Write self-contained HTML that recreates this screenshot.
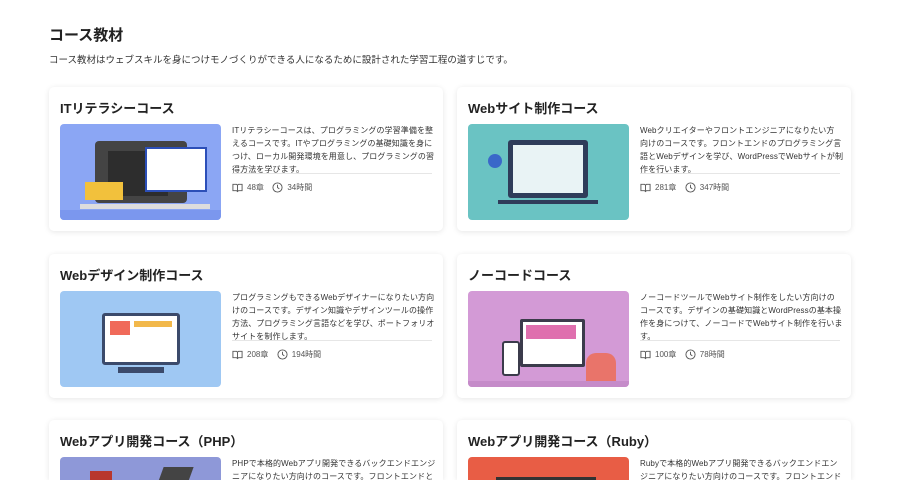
<!DOCTYPE html>
<html><head><meta charset="utf-8"><style>
*{margin:0;padding:0;box-sizing:border-box}
html,body{width:900px;height:482px;overflow:hidden;background:#fff}
body{font-family:"Liberation Sans","Noto Sans CJK JP",sans-serif;color:#222;position:relative}
.wrap{position:absolute;left:0;top:0;width:900px;height:480px;overflow:hidden}
h1{position:absolute;left:49px;top:24px;font-size:15px;font-weight:bold}
.lead{position:absolute;left:49px;top:52px;font-size:9.5px;color:#333}
.card{position:absolute;width:394px;height:144px;background:#fff;border-radius:5px;box-shadow:0 1px 6px rgba(0,0,0,.1)}
.card.last{height:60px;border-radius:5px 5px 0 0}
.card h2{position:absolute;left:11px;top:11px;font-size:13px;font-weight:bold;color:#222}
.img{position:absolute;left:11px;top:37px;width:161px;height:96px;border-radius:4px;overflow:hidden}
.desc{position:absolute;left:183px;top:37px;width:204px;font-size:8px;line-height:13px;color:#333;letter-spacing:.1px}
.hr{position:absolute;left:183px;top:86px;width:200px;border-top:1px solid #e6e6e6}
.meta{position:absolute;left:183px;top:95px;font-size:8px;color:#555;display:flex;align-items:center;gap:4px}
.meta svg{width:11px;height:11px}
</style></head><body><div class="wrap">
<h1>コース教材</h1>
<div class="lead">コース教材はウェブスキルを身につけモノづくりができる人になるために設計された学習工程の道すじです。</div>

<div class="card" style="left:49px;top:87px"><h2>ITリテラシーコース</h2>
<div class="img" style="background:#8ba6f4"><div style="position:absolute;left:35px;top:17px;width:92px;height:62px;background:#444;border-radius:4px"></div><div style="position:absolute;left:48px;top:27px;width:60px;height:45px;background:#2d2d2d"></div><div style="position:absolute;left:85px;top:23px;width:62px;height:45px;background:#fff;border:2px solid #2c4fb8"></div><div style="position:absolute;left:20px;top:80px;width:130px;height:5px;background:#ddd"></div><div style="position:absolute;left:25px;top:58px;width:38px;height:18px;background:#f2c13c"></div><div style="position:absolute;left:0;top:86px;width:161px;height:10px;background:#7b97ee"></div></div>
<div class="desc">ITリテラシーコースは、プログラミングの学習準備を整えるコースです。ITやプログラミングの基礎知識を身につけ、ローカル開発環境を用意し、プログラミングの習得方法を学びます。</div>
<div class="hr"></div>
<div class="meta"><svg viewBox="0 0 12 12" fill="none" stroke="#555" stroke-width="1"><path d="M1 2.5h4l1 1 1-1h4v7H7l-1 1-1-1H1z M6 3.5v6"/></svg>48章 &nbsp;<svg viewBox="0 0 12 12" fill="none" stroke="#555" stroke-width="1"><circle cx="6" cy="6" r="5"/><path d="M6 3v3l2 1.5"/></svg>34時間</div></div>

<div class="card" style="left:457px;top:87px"><h2>Webサイト制作コース</h2>
<div class="img" style="background:#6ac3c3"><div style="position:absolute;left:40px;top:16px;width:80px;height:58px;background:#2f3c5a;border-radius:3px"></div><div style="position:absolute;left:45px;top:21px;width:70px;height:48px;background:#e9f3f5"></div><div style="position:absolute;left:30px;top:76px;width:100px;height:4px;background:#2f3c5a"></div><div style="position:absolute;left:20px;top:30px;width:14px;height:14px;border-radius:50%;background:#3a68c9"></div></div>
<div class="desc">Webクリエイターやフロントエンジニアになりたい方<br>向けのコースです。フロントエンドのプログラミング言語とWebデザインを学び、WordPressでWebサイトが制作を行います。</div>
<div class="hr"></div>
<div class="meta"><svg viewBox="0 0 12 12" fill="none" stroke="#555" stroke-width="1"><path d="M1 2.5h4l1 1 1-1h4v7H7l-1 1-1-1H1z M6 3.5v6"/></svg>281章 &nbsp;<svg viewBox="0 0 12 12" fill="none" stroke="#555" stroke-width="1"><circle cx="6" cy="6" r="5"/><path d="M6 3v3l2 1.5"/></svg>347時間</div></div>

<div class="card" style="left:49px;top:254px"><h2>Webデザイン制作コース</h2>
<div class="img" style="background:#9fc8f3"><div style="position:absolute;left:42px;top:22px;width:78px;height:52px;background:#fff;border:3px solid #3b4a6b;border-radius:3px"></div><div style="position:absolute;left:50px;top:30px;width:20px;height:14px;background:#f06a5a"></div><div style="position:absolute;left:74px;top:30px;width:38px;height:6px;background:#f2b84b"></div><div style="position:absolute;left:58px;top:76px;width:46px;height:6px;background:#3b4a6b"></div></div>
<div class="desc">プログラミングもできるWebデザイナーになりたい方向けのコースです。デザイン知識やデザインツールの操作方法、プログラミング言語などを学び、ポートフォリオサイトを制作します。</div>
<div class="hr"></div>
<div class="meta"><svg viewBox="0 0 12 12" fill="none" stroke="#555" stroke-width="1"><path d="M1 2.5h4l1 1 1-1h4v7H7l-1 1-1-1H1z M6 3.5v6"/></svg>208章 &nbsp;<svg viewBox="0 0 12 12" fill="none" stroke="#555" stroke-width="1"><circle cx="6" cy="6" r="5"/><path d="M6 3v3l2 1.5"/></svg>194時間</div></div>

<div class="card" style="left:457px;top:254px"><h2>ノーコードコース</h2>
<div class="img" style="background:#d39ad6"><div style="position:absolute;left:52px;top:28px;width:65px;height:48px;background:#fff;border:3px solid #3b3b4b;border-radius:2px"></div><div style="position:absolute;left:58px;top:34px;width:50px;height:14px;background:#df6fae"></div><div style="position:absolute;left:34px;top:50px;width:18px;height:35px;background:#fff;border:2px solid #3b3b4b;border-radius:3px"></div><div style="position:absolute;left:118px;top:62px;width:30px;height:34px;background:#e9746a;border-radius:10px 10px 0 0"></div><div style="position:absolute;left:0;top:90px;width:161px;height:6px;background:#c58bc9"></div></div>
<div class="desc">ノーコードツールでWebサイト制作をしたい方向けの<br>コースです。デザインの基礎知識とWordPressの基本操作を身につけて、ノーコードでWebサイト制作を行います。</div>
<div class="hr"></div>
<div class="meta"><svg viewBox="0 0 12 12" fill="none" stroke="#555" stroke-width="1"><path d="M1 2.5h4l1 1 1-1h4v7H7l-1 1-1-1H1z M6 3.5v6"/></svg>100章 &nbsp;<svg viewBox="0 0 12 12" fill="none" stroke="#555" stroke-width="1"><circle cx="6" cy="6" r="5"/><path d="M6 3v3l2 1.5"/></svg>78時間</div></div>

<div class="card last" style="left:49px;top:420px"><h2>Webアプリ開発コース（PHP）</h2>
<div class="img" style="background:#8e98d8;height:23px;border-radius:4px 4px 0 0"><div style="position:absolute;left:30px;top:14px;width:22px;height:16px;background:#b8372e"></div><div style="position:absolute;left:100px;top:10px;width:30px;height:20px;background:#444;transform:skew(-20deg)"></div></div>
<div class="desc" style="height:23px;overflow:hidden">PHPで本格的Webアプリ開発できるバックエンドエンジニアになりたい方向けのコースです。フロントエンドとバックエンドのプログラミング言語を学び、Webアプリを開発します。</div></div>

<div class="card last" style="left:457px;top:420px"><h2>Webアプリ開発コース（Ruby）</h2>
<div class="img" style="background:#e85d45;height:23px;border-radius:4px 4px 0 0"><div style="position:absolute;left:28px;top:20px;width:100px;height:30px;background:#333"></div></div>
<div class="desc" style="height:23px;overflow:hidden">Rubyで本格的Webアプリ開発できるバックエンドエンジニアになりたい方向けのコースです。フロントエンドとバックエンドのプログラミング言語を学び、Webアプリを開発します。</div></div>
</div>
</body></html>
